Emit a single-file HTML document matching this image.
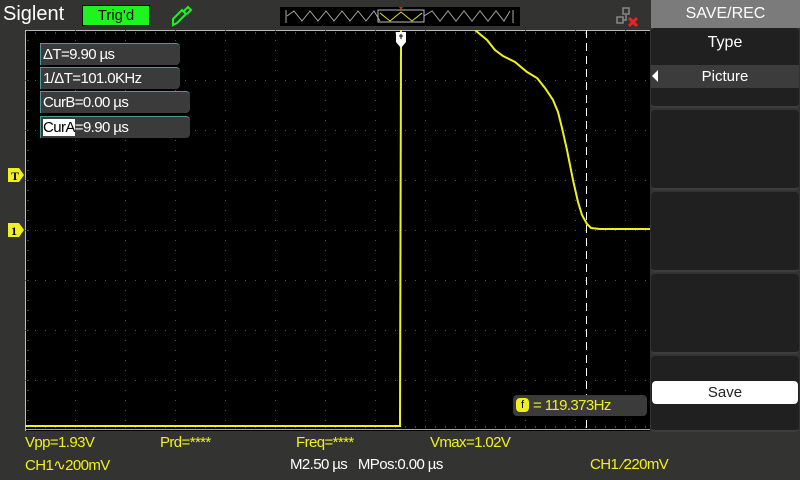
<!DOCTYPE html>
<html><head><meta charset="utf-8"><style>
body{margin:0;width:800px;height:480px;background:#333432;overflow:hidden;position:relative;font-family:"Liberation Sans",sans-serif}
.a{position:absolute;white-space:nowrap}
.y{color:#f0f020;font-size:15px;letter-spacing:-0.6px}
.box{position:absolute;background:#3a3b3a;border-left:1px solid #4a9a9a;border-top:1px solid #4a9a9a;border-radius:0 4px 4px 0;color:#fff;font-size:15px;height:22px;line-height:22px;padding-left:2px;box-sizing:border-box;letter-spacing:-0.6px}
.item{position:absolute;left:651px;width:148px;background:#1f201f;border-radius:4px;border-bottom:2px solid #3c3d3c}
</style></head><body>
<div class="a" style="left:3px;top:3px;color:#fff;font-size:20px">Siglent</div>
<div class="a" style="left:82px;top:5px;width:66px;height:19px;background:#1ef51e;border:1px solid #111;color:#111;font-size:15px;text-align:center;line-height:19px">Trig'd</div>
<svg class="a" style="left:170px;top:5px" width="24" height="22"><path d="M3 20 L3 14 L12 5 L16 9 L7 18 Z M14 6 L18 2 L21 5 L17 9" fill="none" stroke="#1ef51e" stroke-width="2"/></svg>
<svg class="a" style="left:280px;top:7px" width="240" height="19"><rect width="240" height="19" fill="#000"/><path d="M6 3 L6 16 M7 9 L14 4 L22 14 L30 4 L38 14 L46 4 L54 14 L62 4 L70 14 L78 4 L86 14 L94 4 L100 14 M144 9 L152 4 L160 14 L168 4 L176 14 L184 4 L192 14 L200 4 L208 14 L216 4 L224 14 L230 4 M233 3 L233 16" stroke="#aaa" fill="none"/><rect x="98" y="3" width="46" height="12" fill="none" stroke="#bbb"/><path d="M100 6 L110 14 L121 5 L132 14 L142 6" stroke="#dd2" fill="none"/><path d="M119 0 L121 3 L123 0Z" fill="#d22"/></svg>
<svg class="a" style="left:616px;top:6px" width="24" height="22"><rect x="1" y="11" width="6" height="6" fill="none" stroke="#888" stroke-width="1.5"/><rect x="7" y="2" width="6" height="6" fill="none" stroke="#888" stroke-width="1.5"/><path d="M10 9 L10 14 L7 14" stroke="#888" stroke-width="1.5" fill="none"/><path d="M13 12 L21 20 M21 12 L13 20" stroke="#e22" stroke-width="3"/></svg>
<div class="a" style="left:651px;top:0;width:149px;height:28px;background:#7a7b7a;color:#fff;font-size:16px;text-align:center;line-height:28px">SAVE/REC</div>
<div class="item" style="top:28px;height:78px"><div class="a" style="top:6px;width:148px;text-align:center;color:#fff;font-size:16px">Type</div><div class="a" style="top:37px;width:148px;height:23px;background:#3b3c3b;color:#fff;font-size:15px;text-align:center;line-height:23px">Picture</div><div class="a" style="left:1px;top:42px;width:0;height:0;border-top:6px solid transparent;border-bottom:6px solid transparent;border-right:6px solid #fff"></div></div>
<div class="item" style="top:110px;height:78px"></div>
<div class="item" style="top:192px;height:78px"></div>
<div class="item" style="top:274px;height:78px"></div>
<div class="item" style="top:356px;height:74px"></div>
<div class="a" style="left:652px;top:381px;width:146px;height:23px;background:#fff;border-radius:4px;text-align:center;color:#222;font-size:15px;line-height:23px">Save</div>
<svg class="a" style="left:25px;top:30px" width="625" height="401">
<rect width="625" height="401" fill="#000"/>
<line x1="0" y1="0.5" x2="625" y2="0.5" stroke="#bbb"/>
<line x1="0.5" y1="0" x2="0.5" y2="401" stroke="#bbb"/>
<g stroke="#555" stroke-width="1" stroke-dasharray="1 9">
<path d="M0 50.5H625M0 100.5H625M0 150.5H625M0 200.5H625M0 250.5H625M0 300.5H625M0 350.5H625"/>
<path d="M50.5 0V400M100.5 0V400M150.5 0V400M200.5 0V400M250.5 0V400M300.5 0V400M350.5 0V400M400.5 0V400M450.5 0V400M500.5 0V400M550.5 0V400M600.5 0V400"/>
</g>
<g stroke="#888" stroke-dasharray="1 9"><path d="M0 3H625M0 397H625M3 0V400"/></g>
<line x1="0" y1="399.5" x2="625" y2="399.5" stroke="#aaa"/>
<line x1="561.5" y1="0" x2="561.5" y2="400" stroke="#fff" stroke-dasharray="8 5"/>
<path d="M0 396 L375 396 L375 390 L376 20 L376 0 M450 0 L462 10 L470 20 L478 26 L490 32 L502 42 L512 48 L520 58 L528 70 L533 82 L537 98 L542 120 L548 150 L553 172 L557 185 L562 194 L566 198 L575 199 L625 199" fill="none" stroke="#f0f020" stroke-width="2"/>
<path d="M371 2 h10 v10 l-5 6 l-5 -6z" fill="#fff"/><path d="M374 6h4M376 4v5" stroke="#000"/>
</svg>
<div class="box" style="left:40px;top:43px;width:140px">ΔT=9.90 µs</div>
<div class="box" style="left:40px;top:67px;width:140px">1/ΔT=101.0KHz</div>
<div class="box" style="left:40px;top:91px;width:150px">CurB=0.00 µs</div>
<div class="box" style="left:40px;top:116px;width:150px"><span style="background:#fff;color:#000">CurA</span>=9.90 µs</div>
<div class="a" style="left:513px;top:395px;width:134px;height:21px;background:#3a3b3a;border-radius:4px"></div>
<div class="a" style="left:516px;top:398px;width:13px;height:14px;background:#f0f020;border-radius:4px;color:#000;font-size:11px;text-align:center;line-height:14px">f</div>
<div class="a y" style="left:533px;top:397px">= 119.373Hz</div>
<svg class="a" style="left:8px;top:168px" width="18" height="70"><path d="M0 0h11l5 7l-5 7h-11z" fill="#f0f020"/><path d="M0 55h11l5 7l-5 7h-11z" fill="#f0f020"/><text x="3" y="12" font-size="12" font-weight="bold" font-family="Liberation Serif">T</text><text x="3" y="67" font-size="12" font-weight="bold" font-family="Liberation Serif">1</text></svg>
<div class="a y" style="left:25px;top:434px">Vpp=1.93V</div>
<div class="a y" style="left:160px;top:434px">Prd=****</div>
<div class="a y" style="left:296px;top:434px">Freq=****</div>
<div class="a y" style="left:430px;top:434px">Vmax=1.02V</div>
<div class="a y" style="left:25px;top:456px">CH1∿200mV</div>
<div class="a" style="left:290px;top:456px;color:#fff;font-size:15px;letter-spacing:-0.6px">M2.50 µs&nbsp;&nbsp; MPos:0.00 µs</div>
<div class="a y" style="left:590px;top:456px">CH1 ⁄220mV</div>
</body></html>
